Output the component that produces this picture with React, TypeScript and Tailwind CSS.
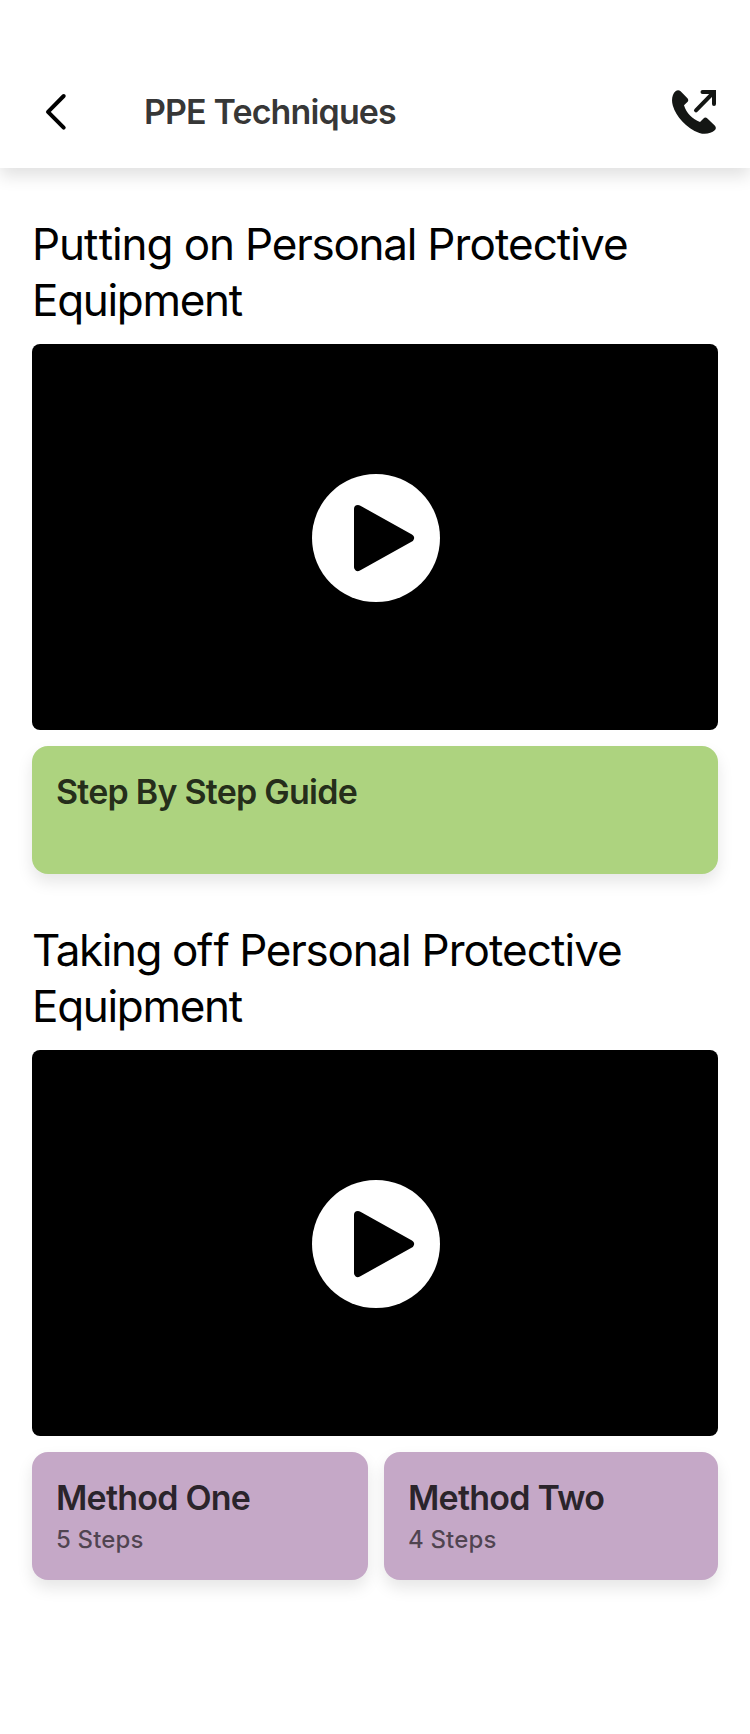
import React from 'react';

function Video() {
  return (
    <div className="flex h-[386px] w-full items-center justify-center rounded-[8px] bg-black">
      <svg className="ml-[2px] mt-[2px] h-32 w-32" viewBox="0 0 128 128">
        <circle cx="64" cy="64" r="64" fill="white" />
        <path d="M46 35 L98 64 L46 93 Z" fill="black" stroke="black" strokeWidth="8" strokeLinejoin="round" />
      </svg>
    </div>
  );
}

function Heading({ children }: { children: React.ReactNode }) {
  return (
    <h2 className="h-28 whitespace-nowrap text-[44px] leading-[56px] text-black">
      {children}
      <span className="tracking-[-1.24px]">Personal </span>
      <span className="tracking-[-0.93px]">Protective</span>
      <br />
      <span className="tracking-[-1.3px]">Equipment</span>
    </h2>
  );
}

function Card({ title, steps, color }: { title: string; steps?: string; color: string }) {
  return (
    <button className={`flex h-32 flex-col items-start rounded-[16px] px-6 pt-[23px] text-left shadow-[0_8px_16px_rgba(0,0,0,0.1)] ${color}`}>
      <span className="text-[34px] font-semibold leading-[46px] tracking-[-0.77px] text-black/80">{title}</span>
      {steps && <span className="mt-px text-[24px] font-[450] leading-[36px] tracking-[0.15px] text-black/60">{steps}</span>}
    </button>
  );
}

export default function App() {
  return (
    <div className="h-[1734px] w-[750px] overflow-hidden bg-white font-['Inter',sans-serif]">
      <header className="flex h-[168px] items-end px-8 shadow-[0_8px_16px_rgba(0,0,0,0.12)]">
        <svg className="mb-[36px] h-10 w-10" viewBox="0 0 40 40" fill="none">
          <path d="M31.7 4 L16 19.8 L31.7 35.7" stroke="black" strokeWidth="4" strokeLinecap="round" strokeLinejoin="round" />
        </svg>
        <h1 className="mb-[33px] ml-[72px] flex-1 text-[34px] font-semibold leading-[46px] tracking-[-0.87px] text-black/80">PPE Techniques</h1>
        <svg className="mb-[34px] mr-[2px] h-11 w-11" viewBox="0 0 44 44" fill="none">
          <path d="M3.5 1.2Q6.3-.8 8.6 1.3L15.2 8.1Q17.2 10.2 15.4 12L12 15.3C14.2 22.8 20.6 29.5 28 32L31.5 28.5Q33.4 26.6 35.4 28.6L42.7 35.6Q45 38 42.7 40.3C39.4 43.3 33.2 45 27.4 43C14.2 38.2 4 26.5.8 15.5C-1 9.2.5 3.8 3.5 1.2Z" fill="#141614" />
          <path d="M24 20.3L41 3M30.5 2H42V14" stroke="#141614" strokeWidth="4" strokeLinecap="round" strokeLinejoin="miter" />
        </svg>
      </header>
      <main className="px-8 pt-[48px]">
        <Heading>
          <span className="tracking-[-1.1px]">Pu<span className="tracking-[0.4px]">t</span>ting on </span>
        </Heading>
        <div className="mt-4"><Video /></div>
        <div className="mt-4 grid"><Card title="Step By Step Guide" color="bg-[#add37f]" /></div>
        <div className="mt-12">
          <Heading>
            <span className="tracking-[-1.42px]">Taking o<span className="tracking-[0px]">f</span>f </span>
          </Heading>
        </div>
        <div className="mt-4"><Video /></div>
        <div className="mt-4 grid grid-cols-[336px_334px] gap-4">
          <Card title="Method One" steps="5 Steps" color="bg-[#c5a8c7]" />
          <Card title="Method Two" steps="4 Steps" color="bg-[#c5a8c7]" />
        </div>
      </main>
    </div>
  );
}
